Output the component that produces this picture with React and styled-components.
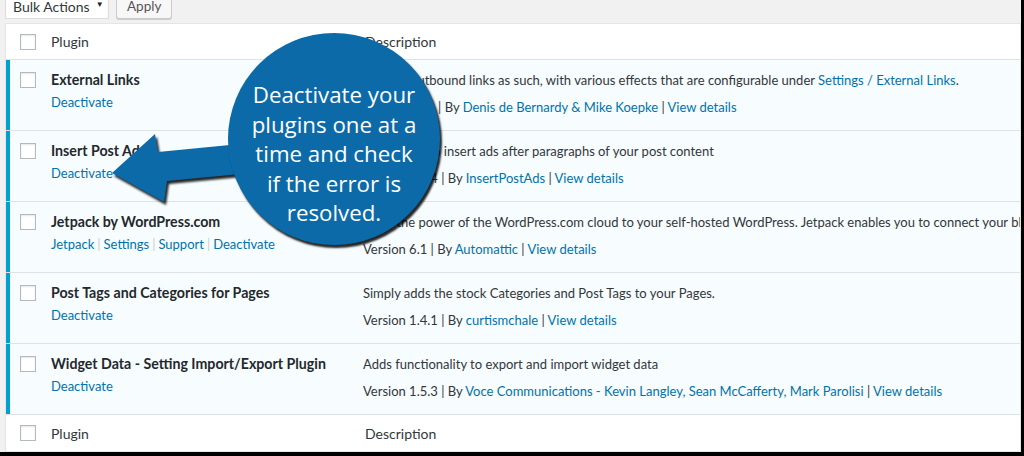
import React from 'react'
import styled, { createGlobalStyle } from 'styled-components'

const GlobalStyle = createGlobalStyle`
  html, body { margin: 0; padding: 0; }
  body {
    background: #000;
    font-family: Lato, "Open Sans", "Liberation Sans", Arial, sans-serif;
    font-size: 13px;
    color: #32373c;
  }
`

const Page = styled.div`
  position: relative;
  width: 1024px;
  height: 456px;
  box-sizing: border-box;
  background: #f1f1f1;
  border-right: 3px solid #000;
  border-bottom: 4px solid #000;
  padding-left: 5px;
  overflow: hidden;
`

const Toolbar = styled.div`
  height: 23px;
  box-sizing: border-box;
  padding-bottom: 4px;
  display: flex;
  align-items: flex-end;
  gap: 7px;
  white-space: nowrap;
`

const Select = styled.div`
  flex: none;
  width: 104px;
  height: 28px;
  box-sizing: border-box;
  padding: 0 0 3px 7px;
  display: flex;
  align-items: flex-end;
  background: #fff;
  border: 1px solid #ddd;
  box-shadow: inset 0 1px 2px rgba(0, 0, 0, 0.07);
  font-size: 14px;
  color: #32373c;
  .caret {
    font-size: 8px;
    margin-left: 6px;
    margin-bottom: 6px;
    color: #222;
  }
`

const Button = styled.div`
  flex: none;
  height: 28px;
  box-sizing: border-box;
  padding: 0 10px 4px;
  display: flex;
  align-items: flex-end;
  background: #f7f7f7;
  border: 1px solid #ccc;
  border-radius: 3px;
  box-shadow: 0 1px 0 #ccc;
  font-size: 13.5px;
  color: #555;
`

const Table = styled.div`
  background: #fff;
  border: 1px solid #e5e5e5;
  box-shadow: 0 1px 1px rgba(0, 0, 0, 0.04);
  white-space: nowrap;
  overflow: hidden;
`

const HeadRow = styled.div`
  display: grid;
  grid-template-columns: 45px 314px 1fr;
  align-items: center;
  height: 36px;
  box-sizing: border-box;
  border-bottom: ${(p) => (p.$foot ? 'none' : '1px solid #e1e1e1')};
`

const HeadLabel = styled.div`
  font-size: 14px;
  color: #32373c;
`

const Row = styled.div`
  display: grid;
  grid-template-columns: 45px 312px 1fr;
  align-items: start;
  height: 71px;
  box-sizing: border-box;
  padding-top: 10px;
  background: #f7fcfe;
  box-shadow: inset 4px 0 0 #00a0d2;
  border-bottom: 1px solid #e1e1e1;
`

const Cell = styled.div`
  padding-left: 14px;
  display: flex;
  align-items: center;
  height: 20px;
`

const Checkbox = styled.span`
  display: block;
  width: 16px;
  height: 16px;
  box-sizing: border-box;
  border: 1px solid #b4b9be;
  background: #fff;
  box-shadow: inset 0 1px 2px rgba(0, 0, 0, 0.1);
`

const NameCell = styled.div`
  display: flex;
  flex-direction: column;
  gap: 2px;
`

const Title = styled.div`
  font-weight: 700;
  font-size: 14.2px;
  line-height: 20px;
  color: #23282d;
`

const Actions = styled.div`
  line-height: 20px;
`

const Sep = styled.span`
  color: #ccc;
  margin: 0 3px;
`

const Link = styled.span`
  color: #0073aa;
`

const DescCell = styled.div`
  overflow: hidden;
`

const Desc = styled.div`
  line-height: 20px;
`

const Meta = styled.div`
  line-height: 20px;
  margin-top: 7px;
`

const Arrow = styled.svg`
  position: absolute;
  left: 0;
  top: 0;
  filter: drop-shadow(2px 3px 1px rgba(0, 0, 0, 0.85));
`

const Bubble = styled.div`
  position: absolute;
  left: 228px;
  top: 33px;
  width: 212px;
  height: 212px;
  box-sizing: border-box;
  padding-top: 30px;
  border-radius: 50%;
  background: #0c6aa8;
  box-shadow: 2px 3px 2px rgba(0, 0, 0, 0.85);
  display: flex;
  flex-direction: column;
  align-items: center;
  justify-content: center;
  text-align: center;
  color: #fff;
  font-family: "Open Sans", "Noto Sans", sans-serif;
  font-size: 22.3px;
  line-height: 29.5px;
  white-space: nowrap;
`

const plugins = [
  {
    name: 'External Links',
    actions: ['Deactivate'],
    desc: (
      <>
        Process outbound links as such, with various effects that are configurable under{' '}
        <Link>Settings / External Links</Link>.
      </>
    ),
    version: '1.81',
    authors: 'Denis de Bernardy & Mike Koepke',
  },
  {
    name: 'Insert Post Ads',
    actions: ['Deactivate'],
    desc: 'Allows you to insert ads after paragraphs of your post content',
    version: '1.2.4',
    authors: 'InsertPostAds',
  },
  {
    name: 'Jetpack by WordPress.com',
    actions: ['Jetpack', 'Settings', 'Support', 'Deactivate'],
    desc: 'Bring the power of the WordPress.com cloud to your self-hosted WordPress. Jetpack enables you to connect your blog to a WordPress.com account to use the powerful features normally only available to WordPress.com users.',
    version: '6.1',
    authors: 'Automattic',
  },
  {
    name: 'Post Tags and Categories for Pages',
    actions: ['Deactivate'],
    desc: 'Simply adds the stock Categories and Post Tags to your Pages.',
    version: '1.4.1',
    authors: 'curtismchale',
  },
  {
    name: 'Widget Data - Setting Import/Export Plugin',
    actions: ['Deactivate'],
    desc: 'Adds functionality to export and import widget data',
    version: '1.5.3',
    authors: 'Voce Communications - Kevin Langley, Sean McCafferty, Mark Parolisi',
  },
]

const bubbleLines = ['Deactivate your', 'plugins one at a', 'time and check', 'if the error is', 'resolved.']

const App = () => {
  return (
    <Page>
      <GlobalStyle />
      <Toolbar>
        <Select>
          Bulk Actions <span className='caret'>▼</span>
        </Select>
        <Button>Apply</Button>
      </Toolbar>
      <Table>
        <HeadRow>
          <Cell><Checkbox /></Cell>
          <HeadLabel>Plugin</HeadLabel>
          <HeadLabel>Description</HeadLabel>
        </HeadRow>
        {plugins.map((p) => (
          <Row key={p.name}>
            <Cell><Checkbox /></Cell>
            <NameCell>
              <Title>{p.name}</Title>
              <Actions>
                {p.actions.map((a, j) => (
                  <React.Fragment key={a}>
                    {j > 0 && <Sep>|</Sep>}
                    <Link>{a}</Link>
                  </React.Fragment>
                ))}
              </Actions>
            </NameCell>
            <DescCell>
              <Desc>{p.desc}</Desc>
              <Meta>
                Version {p.version} | By <Link>{p.authors}</Link> | <Link>View details</Link>
              </Meta>
            </DescCell>
          </Row>
        ))}
        <HeadRow $foot>
          <Cell><Checkbox /></Cell>
          <HeadLabel>Plugin</HeadLabel>
          <HeadLabel>Description</HeadLabel>
        </HeadRow>
      </Table>

      <Arrow viewBox='0 0 260 260' width='260' height='260'>
        <polygon points='112,173 155,134 158,152 240,144 240,174 167,181 164,202' fill='#0c6aa8' />
      </Arrow>
      <Bubble>
        {bubbleLines.map((l) => (
          <div key={l}>{l}</div>
        ))}
      </Bubble>
    </Page>
  )
}

export default App
